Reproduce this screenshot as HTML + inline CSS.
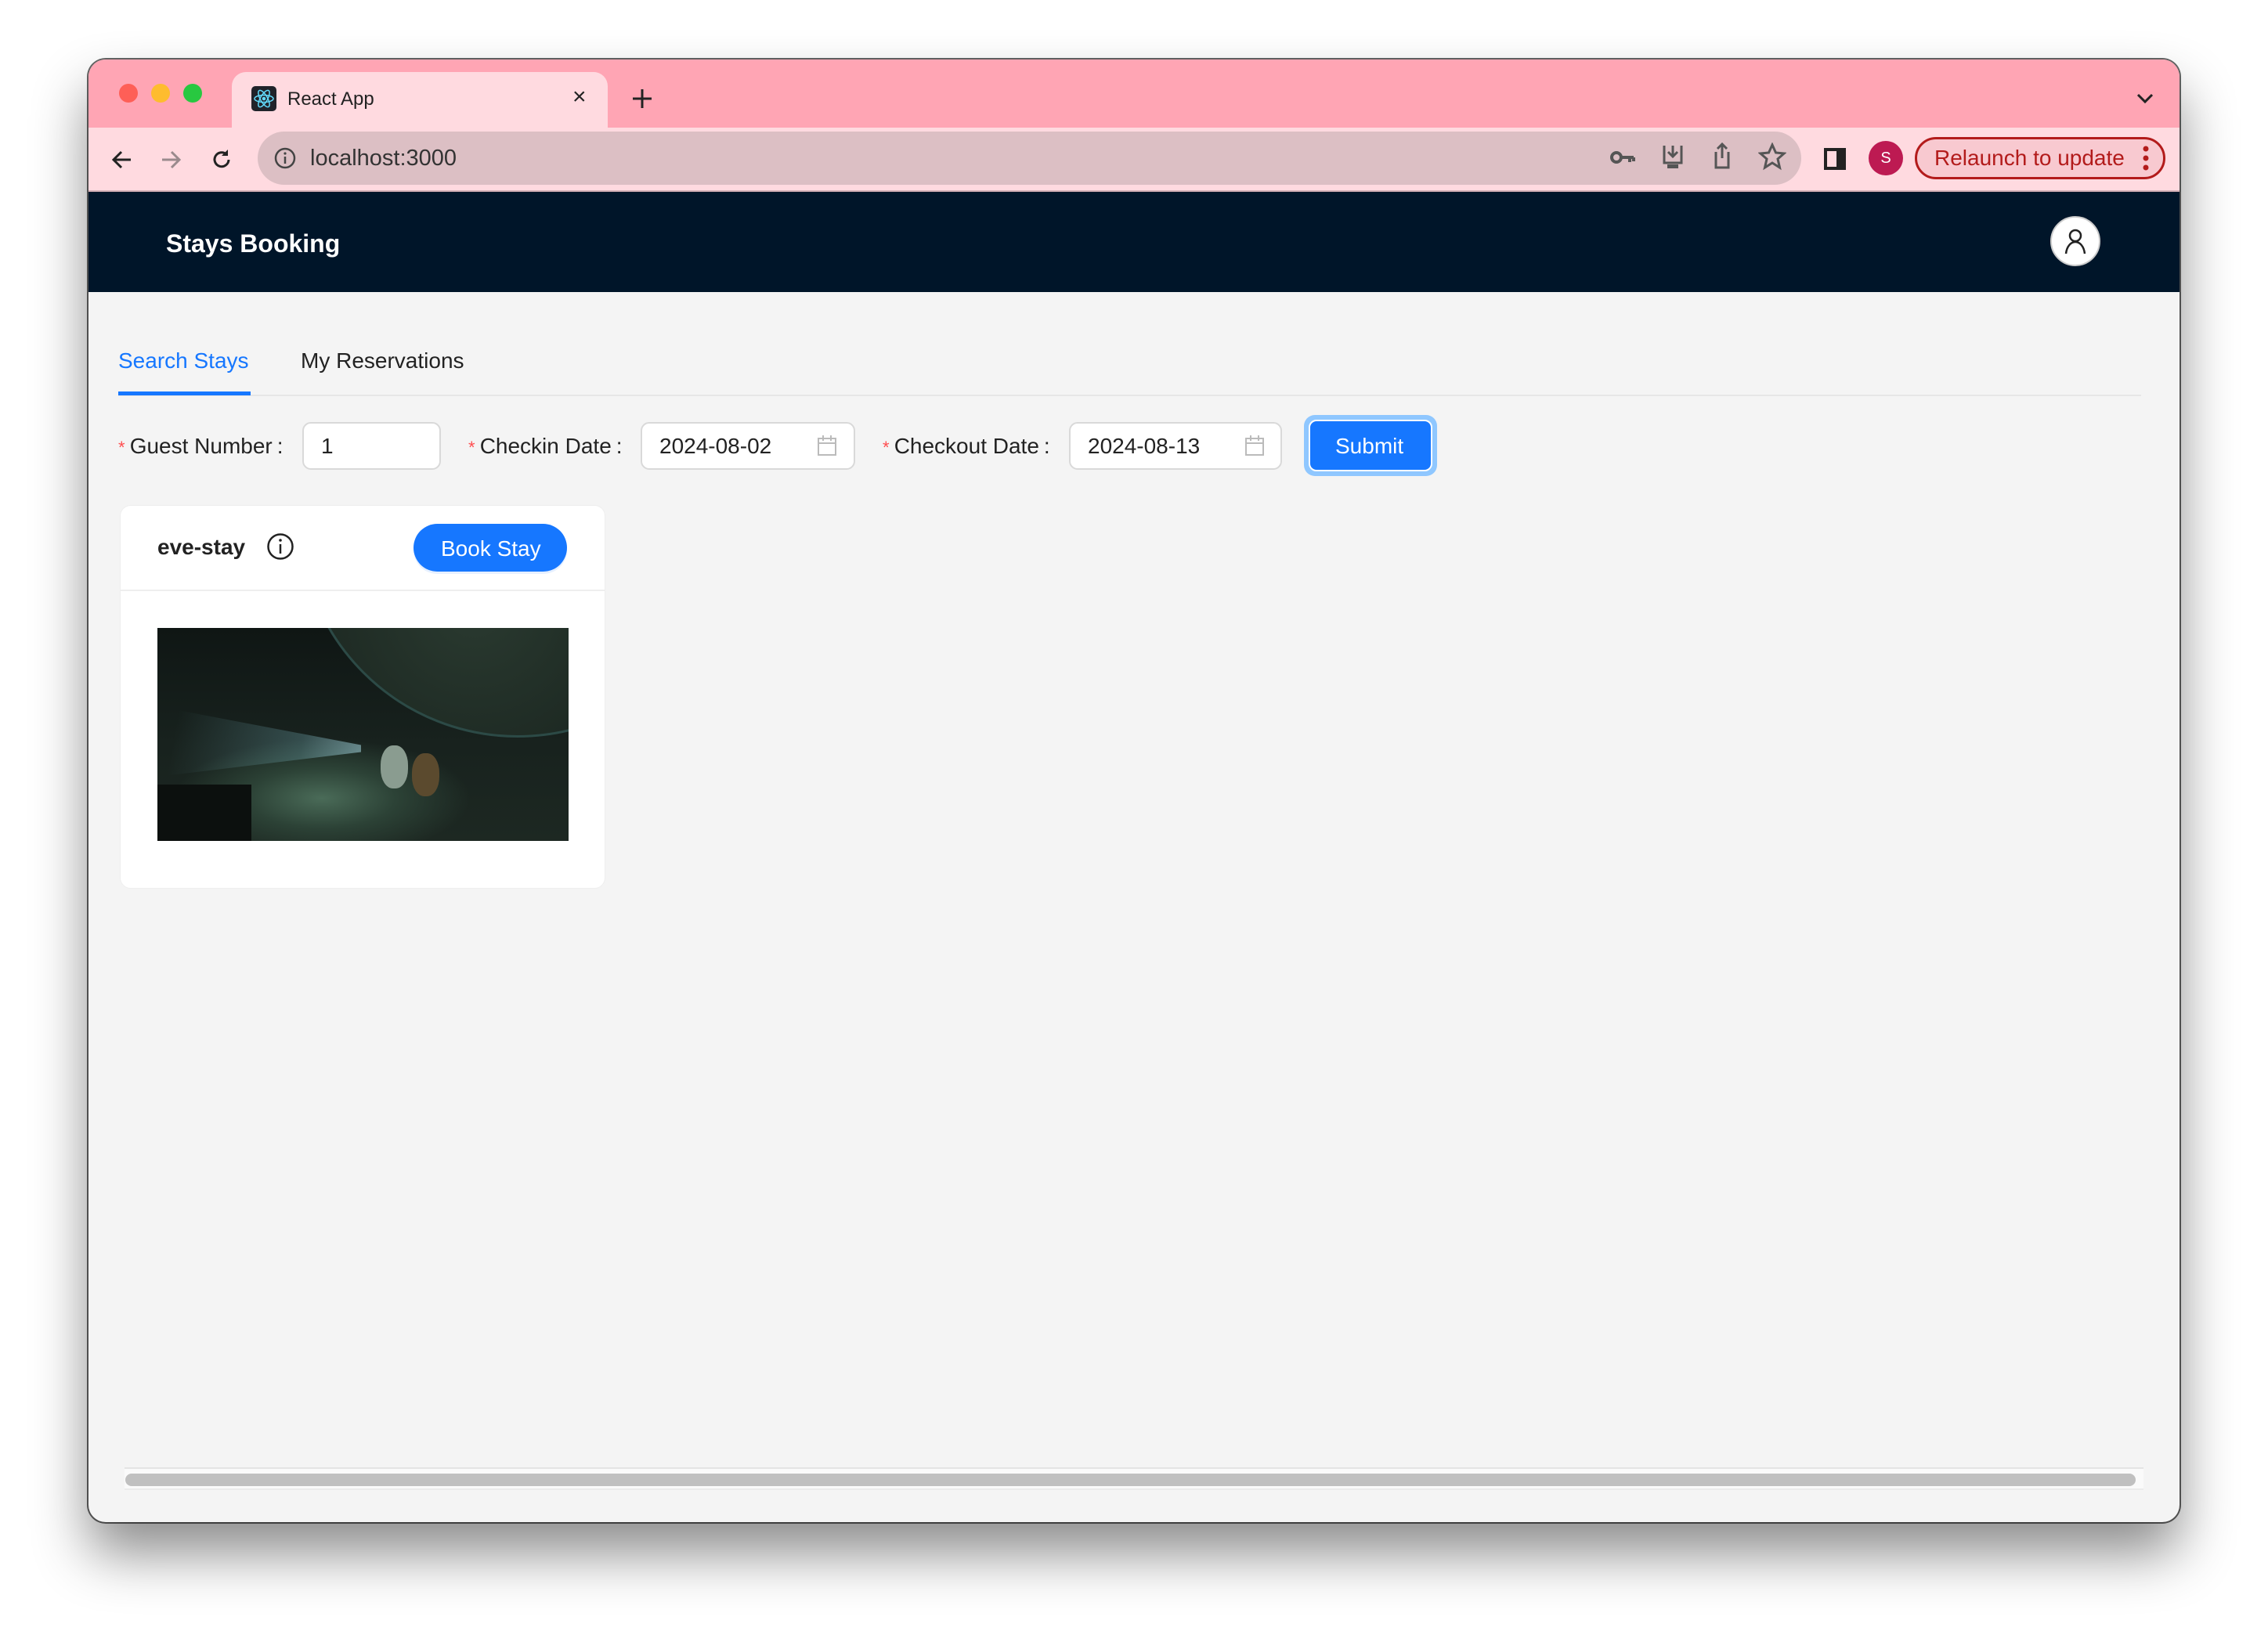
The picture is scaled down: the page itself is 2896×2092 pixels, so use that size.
<!DOCTYPE html>
<html><head><meta charset="utf-8">
<style>
*{box-sizing:border-box;margin:0;padding:0}
body{width:2896px;height:2092px;background:#fff;position:relative;overflow:hidden;font-family:"Liberation Sans",sans-serif}
.abs{position:absolute}
#win{left:113px;top:76px;width:2670px;height:1868px;border-radius:22px;overflow:hidden;background:#f4f4f4;box-shadow:0 40px 70px rgba(0,0,0,.45),0 0 0 2px rgba(0,0,0,.6)}
.t{white-space:nowrap}
.input{background:#fff;border:2px solid #d9d9d9;border-radius:11px}
.lbl{font-size:28px;color:#222}
.star{color:#ff4d4f;font-size:22px}
</style></head><body>
<div id="win" class="abs">
  <div class="abs" style="left:0;top:0;width:2670px;height:87px;background:#ffa5b4"></div>
  <div class="abs" style="left:39px;top:31px;width:24px;height:24px;border-radius:50%;background:#fe5f57"></div>
  <div class="abs" style="left:80px;top:31px;width:24px;height:24px;border-radius:50%;background:#febc2e"></div>
  <div class="abs" style="left:121px;top:31px;width:24px;height:24px;border-radius:50%;background:#28c840"></div>
  <div class="abs" style="left:183px;top:16px;width:480px;height:80px;background:#ffdae0;border-radius:18px 18px 0 0"></div>
  <div class="abs" style="left:208px;top:34px;width:32px;height:32px;background:#20232a;border-radius:5px">
    <svg width="32" height="32" viewBox="0 0 32 32"><g fill="none" stroke="#61dafb" stroke-width="1.5"><ellipse cx="16" cy="16" rx="12" ry="4.5"/><ellipse cx="16" cy="16" rx="12" ry="4.5" transform="rotate(60 16 16)"/><ellipse cx="16" cy="16" rx="12" ry="4.5" transform="rotate(120 16 16)"/></g><circle cx="16" cy="16" r="2.3" fill="#61dafb"/></svg>
  </div>
  <div class="abs t" style="left:254px;top:37px;font-size:24px;color:#222">React App</div>
  <div class="abs t" style="left:618px;top:31px;font-size:30px;color:#222">×</div>
  <svg class="abs" style="left:693px;top:36px" width="28" height="28"><path d="M14 2v24M2 14h24" stroke="#222" stroke-width="3"/></svg>
  <svg class="abs" style="left:2614px;top:42px" width="24" height="16"><path d="M3 3l9 9 9-9" stroke="#222" stroke-width="3" fill="none"/></svg>
  <div class="abs" style="left:0;top:87px;width:2670px;height:82px;background:#ffdae0;border-bottom:2px solid #d4b0b6"></div>
  <svg class="abs" style="left:24px;top:110px" width="36" height="36"><path d="M30 18H8M18 8L8 18l10 10" stroke="#222" stroke-width="3" fill="none"/></svg>
  <svg class="abs" style="left:88px;top:110px" width="36" height="36"><path d="M6 18h22M18 8l10 10-10 10" stroke="#9a8a8d" stroke-width="3" fill="none"/></svg>
  <svg class="abs" style="left:152px;top:110px" width="36" height="36"><path d="M27 18a9 9 0 1 1-3-7" stroke="#222" stroke-width="3" fill="none"/><path d="M26 5v8h-8" fill="#222"/></svg>
  <div class="abs" style="left:216px;top:92px;width:1971px;height:68px;background:#dcbfc4;border-radius:34px"></div>
  <svg class="abs" style="left:236px;top:111px" width="30" height="30"><circle cx="15" cy="15" r="12" stroke="#444" stroke-width="2.5" fill="none"/><path d="M15 13v9" stroke="#444" stroke-width="2.5"/><circle cx="15" cy="9" r="1.6" fill="#444"/></svg>
  <div class="abs t" style="left:283px;top:110px;font-size:29px;color:#333">localhost:3000</div>
  <svg class="abs" style="left:1942px;top:110px" width="34" height="30"><circle cx="9" cy="15" r="6" stroke="#555" stroke-width="4" fill="none"/><path d="M15 15h16M26 15v6M31 15v5" stroke="#555" stroke-width="4"/></svg>
  <svg class="abs" style="left:2006px;top:106px" width="34" height="36"><path d="M6 4v22h22V4" stroke="#555" stroke-width="3" fill="none"/><path d="M17 4v14M11 12l6 6 6-6" stroke="#555" stroke-width="3" fill="none"/><rect x="10" y="28" width="14" height="5" fill="#555"/></svg>
  <svg class="abs" style="left:2070px;top:104px" width="32" height="38"><path d="M8 14v20h16V14" stroke="#555" stroke-width="3" fill="none"/><path d="M16 4v18M10 10l6-6 6 6" stroke="#555" stroke-width="3" fill="none"/></svg>
  <svg class="abs" style="left:2132px;top:106px" width="36" height="36"><path d="M18 3l4.5 10 10.5 1-8 7 2.5 11L18 26l-9.5 6L11 21l-8-7 10.5-1z" stroke="#555" stroke-width="3" fill="none"/></svg>
  <div class="abs" style="left:2216px;top:113px;width:28px;height:28px;border:4px solid #222;border-right-width:12px"></div>
  <div class="abs" style="left:2273px;top:104px;width:44px;height:44px;border-radius:50%;background:#bd1a52;color:#fff;font-size:20px;text-align:center;line-height:44px">S</div>
  <div class="abs" style="left:2332px;top:99px;width:320px;height:54px;border:3px solid #b31b1b;border-radius:27px;background:#f8c9d0"></div>
  <div class="abs t" style="left:2357px;top:110px;font-size:28px;color:#b31b1b">Relaunch to update</div>
  <svg class="abs" style="left:2622px;top:108px" width="10" height="36"><circle cx="5" cy="6" r="3.5" fill="#b31b1b"/><circle cx="5" cy="18" r="3.5" fill="#b31b1b"/><circle cx="5" cy="30" r="3.5" fill="#b31b1b"/></svg>
  <div class="abs" style="left:0;top:169px;width:2670px;height:128px;background:#001529"></div>
  <div class="abs t" style="left:99px;top:217px;font-size:32px;color:#fff;font-weight:bold">Stays Booking</div>
  <div class="abs" style="left:2505px;top:200px;width:64px;height:64px;border-radius:50%;background:#fff;border:2px solid #ccc"></div>
  <svg class="abs" style="left:2521px;top:214px" width="32" height="36"><circle cx="16" cy="11" r="7" stroke="#222" stroke-width="2.5" fill="none"/><path d="M4 34c1-9 6-15 12-15s11 6 12 15" stroke="#222" stroke-width="2.5" fill="none"/></svg>
  <div class="abs t" style="left:38px;top:369px;font-size:28px;color:#1677ff">Search Stays</div>
  <div class="abs t" style="left:271px;top:369px;font-size:28px;color:#222">My Reservations</div>
  <div class="abs" style="left:38px;top:428px;width:2583px;height:2px;background:#e6e6e6"></div>
  <div class="abs" style="left:38px;top:424px;width:169px;height:5px;background:#1677ff"></div>
  <div class="abs t lbl" style="left:38px;top:478px"><span class="star">* </span>Guest Number<span style="margin-left:6px">:</span></div>
  <div class="abs input" style="left:273px;top:463px;width:177px;height:61px"></div>
  <div class="abs t lbl" style="left:297px;top:478px">1</div>
  <div class="abs t lbl" style="left:485px;top:478px"><span class="star">* </span>Checkin Date<span style="margin-left:6px">:</span></div>
  <div class="abs input" style="left:705px;top:463px;width:274px;height:61px"></div>
  <div class="abs t lbl" style="left:729px;top:478px">2024-08-02</div>
  <svg class="abs" style="left:930px;top:479px" width="26" height="28"><rect x="2" y="5" width="22" height="21" stroke="#bbb" stroke-width="2" fill="none"/><path d="M2 11h22M8 1v7M18 1v7" stroke="#bbb" stroke-width="2"/></svg>
  <div class="abs t lbl" style="left:1014px;top:478px"><span class="star">* </span>Checkout Date<span style="margin-left:6px">:</span></div>
  <div class="abs input" style="left:1252px;top:463px;width:272px;height:61px"></div>
  <div class="abs t lbl" style="left:1276px;top:478px">2024-08-13</div>
  <svg class="abs" style="left:1476px;top:479px" width="26" height="28"><rect x="2" y="5" width="22" height="21" stroke="#bbb" stroke-width="2" fill="none"/><path d="M2 11h22M8 1v7M18 1v7" stroke="#bbb" stroke-width="2"/></svg>
  <div class="abs" style="left:1552px;top:454px;width:170px;height:78px;border-radius:14px;background:#8fc7ff"></div>
  <div class="abs" style="left:1558px;top:460px;width:158px;height:66px;border-radius:10px;background:#1677ff;border:2px solid #fff"></div>
  <div class="abs t" style="left:1592px;top:478px;font-size:28px;color:#fff">Submit</div>
  <div class="abs" style="left:40px;top:569px;width:620px;height:490px;background:#fff;border-radius:14px;border:1px solid #eee"></div>
  <div class="abs" style="left:40px;top:677px;width:620px;height:2px;background:#eee"></div>
  <div class="abs t" style="left:88px;top:607px;font-size:28px;color:#222;font-weight:bold">eve-stay</div>
  <svg class="abs" style="left:227px;top:604px" width="36" height="36"><circle cx="18" cy="18" r="15.5" stroke="#222" stroke-width="2.5" fill="none"/><path d="M18 15v12" stroke="#222" stroke-width="2.5"/><circle cx="18" cy="10" r="1.8" fill="#222"/></svg>
  <div class="abs" style="left:415px;top:593px;width:196px;height:61px;border-radius:31px;background:#1677ff;box-shadow:0 3px 0 #e6f0ff"></div>
  <div class="abs t" style="left:450px;top:609px;font-size:28px;color:#fff">Book Stay</div>
  <div class="abs" style="left:88px;top:726px;width:525px;height:272px;overflow:hidden;background:radial-gradient(ellipse 45% 35% at 40% 80%,#4a6b58 0%,#2c4236 40%,transparent 80%),linear-gradient(180deg,#0f1614,#18221e 55%,#1d2822)">
    <div class="abs" style="left:180px;top:-420px;width:560px;height:560px;border-radius:50%;background:radial-gradient(circle at 40% 70%,#2a3a30,#141d19 70%);border:3px solid #2c4a46"></div>
    <div class="abs" style="left:0;top:100px;width:260px;height:90px;background:linear-gradient(100deg,transparent 10%,rgba(120,180,190,.3) 70%,rgba(170,220,230,.55) 100%);clip-path:polygon(0 0,100% 55%,100% 65%,0 100%)"></div>
    <div class="abs" style="left:285px;top:150px;width:35px;height:55px;border-radius:45%;background:#8a9c90"></div>
    <div class="abs" style="left:325px;top:160px;width:35px;height:55px;border-radius:45%;background:#5b4a2e"></div>
    <div class="abs" style="left:0;top:200px;width:120px;height:72px;background:#0c100e"></div>
  </div>
  <div class="abs" style="left:46px;top:1798px;width:2578px;height:29px;background:#fafafa;border-top:2px solid #e4e4e4;border-bottom:2px solid #ececec"></div>
  <div class="abs" style="left:47px;top:1806px;width:2567px;height:16px;border-radius:8px;background:#c0c0c0"></div>
</div>
</body></html>
